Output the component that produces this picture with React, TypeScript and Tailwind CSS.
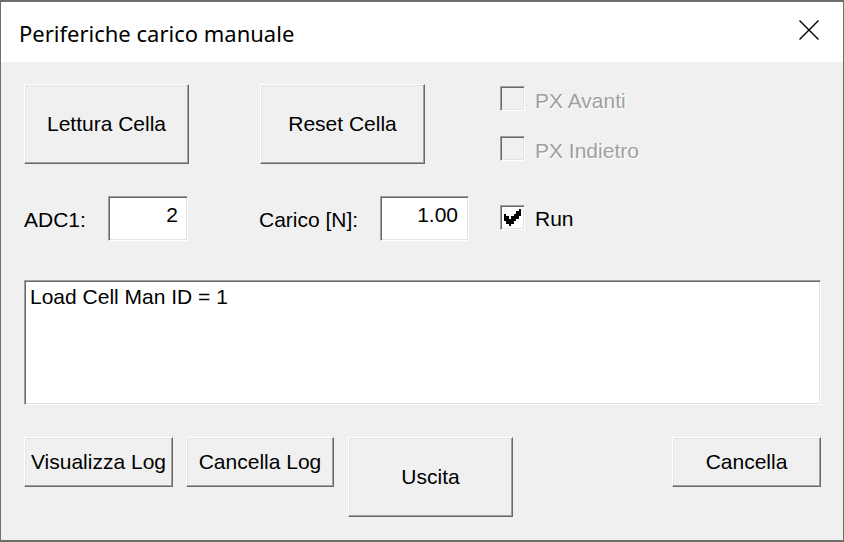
import React from 'react'

const raised =
  'bg-[#f0f0f0] border border-t-white border-l-white border-b-[#696969] border-r-[#696969] shadow-[inset_-1px_-1px_0_#a0a0a0,inset_1px_1px_0_#e3e3e3] flex items-center justify-center whitespace-nowrap'

const sunken =
  'border border-t-[#a0a0a0] border-l-[#a0a0a0] border-b-white border-r-white shadow-[inset_1px_1px_0_#696969,inset_-1px_-1px_0_#e3e3e3]'

function Btn({ w, h, children }: { w: string; h: string; children: React.ReactNode }) {
  return <div className={`${raised} ${w} ${h}`}>{children}</div>
}

function Check({ label, checked, disabled }: { label: string; checked?: boolean; disabled?: boolean }) {
  return (
    <div className="flex items-center gap-[10px] h-[25px]">
      <div className={`${sunken} w-[25px] h-[25px] flex items-center justify-center ${disabled ? 'bg-[#f0f0f0]' : 'bg-white'}`}>
        {checked && (
          <svg width="17" height="17" viewBox="0 0 7 7" shapeRendering="crispEdges">
            <path d="M0 2h1v3h-1zM1 3h1v3h-1zM2 4h1v3h-1zM3 3h1v3h-1zM4 2h1v3h-1zM5 1h1v3h-1zM6 0h1v3h-1z" fill="#000" />
          </svg>
        )}
      </div>
      <span
        className={`pt-[4px] whitespace-nowrap ${disabled ? 'text-[#a0a0a0] [text-shadow:1px_1px_0_#fff]' : 'text-black'}`}
      >
        {label}
      </span>
    </div>
  )
}

export default function App() {
  return (
    <div className="w-[844px] h-[542px] flex flex-col bg-[#f0f0f0] border-x border-y-2 border-[#6e6e6e] overflow-hidden font-['Liberation_Sans',Arial,sans-serif] text-[21px] leading-[24px] text-black">
      {/* title bar */}
      <div className="h-[60px] shrink-0 bg-white flex items-center justify-between pl-[18px] pr-[24px]">
        <span className="font-['Noto_Sans',sans-serif] text-[22px] text-[#000] pt-[1px]">
          Periferiche carico manuale
        </span>
        <svg width="20" height="20" viewBox="0 0 20 20" className="mb-[4px]">
          <path d="M0.5 0.5L19.5 19.5M19.5 0.5L0.5 19.5" stroke="#000" strokeWidth="1.4" />
        </svg>
      </div>

      {/* client */}
      <div className="flex-1 pl-[23px] pr-[22px] pt-[22px]">
        <div className="flex items-start">
          <Btn w="w-[165px]" h="h-[80px]">Lettura Cella</Btn>
          <div className="ml-[71px]">
            <Btn w="w-[165px]" h="h-[80px]">Reset Cella</Btn>
          </div>
          <div className="ml-[75px] mt-[2px] flex flex-col gap-[25px]">
            <Check label="PX Avanti" disabled />
            <Check label="PX Indietro" disabled />
          </div>
        </div>

        <div className="mt-[32px] flex items-center h-[45px]">
          <span className="w-[84px] pt-[2px]">ADC1:</span>
          <div className={`${sunken} bg-white w-[80px] h-[45px] text-right pr-[9px] pt-[6px]`}>2</div>
          <span className="ml-[71px] w-[121px] pt-[2px]">Carico [N]:</span>
          <div className={`${sunken} bg-white w-[89px] h-[45px] text-right pr-[10px] pt-[6px]`}>1.00</div>
          <div className="ml-[31px] mb-[3px]">
            <Check label="Run" checked />
          </div>
        </div>

        <div className={`${sunken} bg-white mt-[39px] h-[125px] w-[797px] pl-[5px] pt-[4px]`}>
          Load Cell Man ID = 1
        </div>

        <div className="mt-[32px] flex items-start">
          <Btn w="w-[149px]" h="h-[50px]">Visualizza Log</Btn>
          <div className="ml-[13px]">
            <Btn w="w-[148px]" h="h-[50px]">Cancella Log</Btn>
          </div>
          <div className="ml-[14px]">
            <Btn w="w-[165px]" h="h-[80px]">Uscita</Btn>
          </div>
          <div className="ml-auto">
            <Btn w="w-[149px]" h="h-[50px]">Cancella</Btn>
          </div>
        </div>
      </div>
    </div>
  )
}
